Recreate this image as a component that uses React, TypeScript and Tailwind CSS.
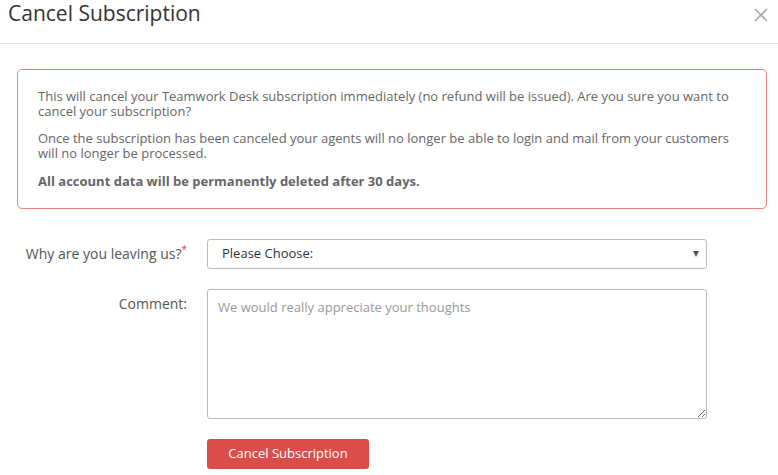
import React from 'react';

export default function App() {
  return (
    <div className="w-[778px] h-[475px] bg-white overflow-hidden font-['Open_Sans',sans-serif] text-[#666]">
      {/* header */}
      <div className="relative h-[44px] border-b border-[#e5e5e5]">
        <h1 className="pl-[8px] text-[21px] leading-[27px] text-[#333]">Cancel Subscription</h1>
        <button className="absolute right-[10px] top-[8px] w-[14px] h-[14px]" aria-label="Close">
          <svg viewBox="0 0 14 14" className="w-[14px] h-[14px]" stroke="#aaa" strokeWidth="1.6">
            <path d="M1 1L13 13M13 1L1 13" />
          </svg>
        </button>
      </div>

      <div className="px-[17px] pt-[25px]">
        {/* warning */}
        <div className="w-[750px] rounded-[5px] border border-[#ef8080] px-[20px] pt-[19px] pb-[19px] text-[13px] leading-[15px]">
          <p>
            This will cancel your Teamwork Desk subscription immediately (no refund will be issued). Are you sure you want to cancel your subscription?
          </p>
          <p className="mt-[12px]">
            Once the subscription has been canceled your agents will no longer be able to login and mail from your customers will no longer be processed.
          </p>
          <p className="mt-[13px] font-bold">All account data will be permanently deleted after 30 days.</p>
        </div>

        {/* form */}
        <div className="mt-[30px] grid grid-cols-[170px_500px] gap-x-[20px] gap-y-[20px]">
          <label className="text-right text-[14px] leading-[30px] text-[#555] whitespace-nowrap">
            Why are you leaving us?<span className="text-[#e0383e] align-top text-[10px] leading-[20px]">*</span>
          </label>
          <div className="relative h-[30px]">
            <select className="appearance-none w-full h-[30px] rounded-[3px] border border-[#bbb] bg-white pl-[14px] text-[13px] text-[#333] outline-none">
              <option>Please Choose:</option>
            </select>
            <span className="pointer-events-none absolute right-[8px] top-[12px] w-0 h-0 border-l-[3px] border-r-[3px] border-t-[6px] border-l-transparent border-r-transparent border-t-[#555]" />
          </div>

          <label className="text-right text-[14px] leading-[30px] text-[#555]">Comment:</label>
          <textarea
            className="w-full h-[130px] rounded-[3px] border border-[#bbb] px-[10px] py-[8px] text-[13px] leading-[18px] text-[#333] placeholder:text-[#999] outline-none"
            placeholder="We would really appreciate your thoughts"
          />

          <div />
          <div>
            <button className="h-[30px] w-[162px] rounded-[3px] bg-[#db4d4a] text-[13px] text-white">Cancel Subscription</button>
          </div>
        </div>
      </div>
    </div>
  );
}
